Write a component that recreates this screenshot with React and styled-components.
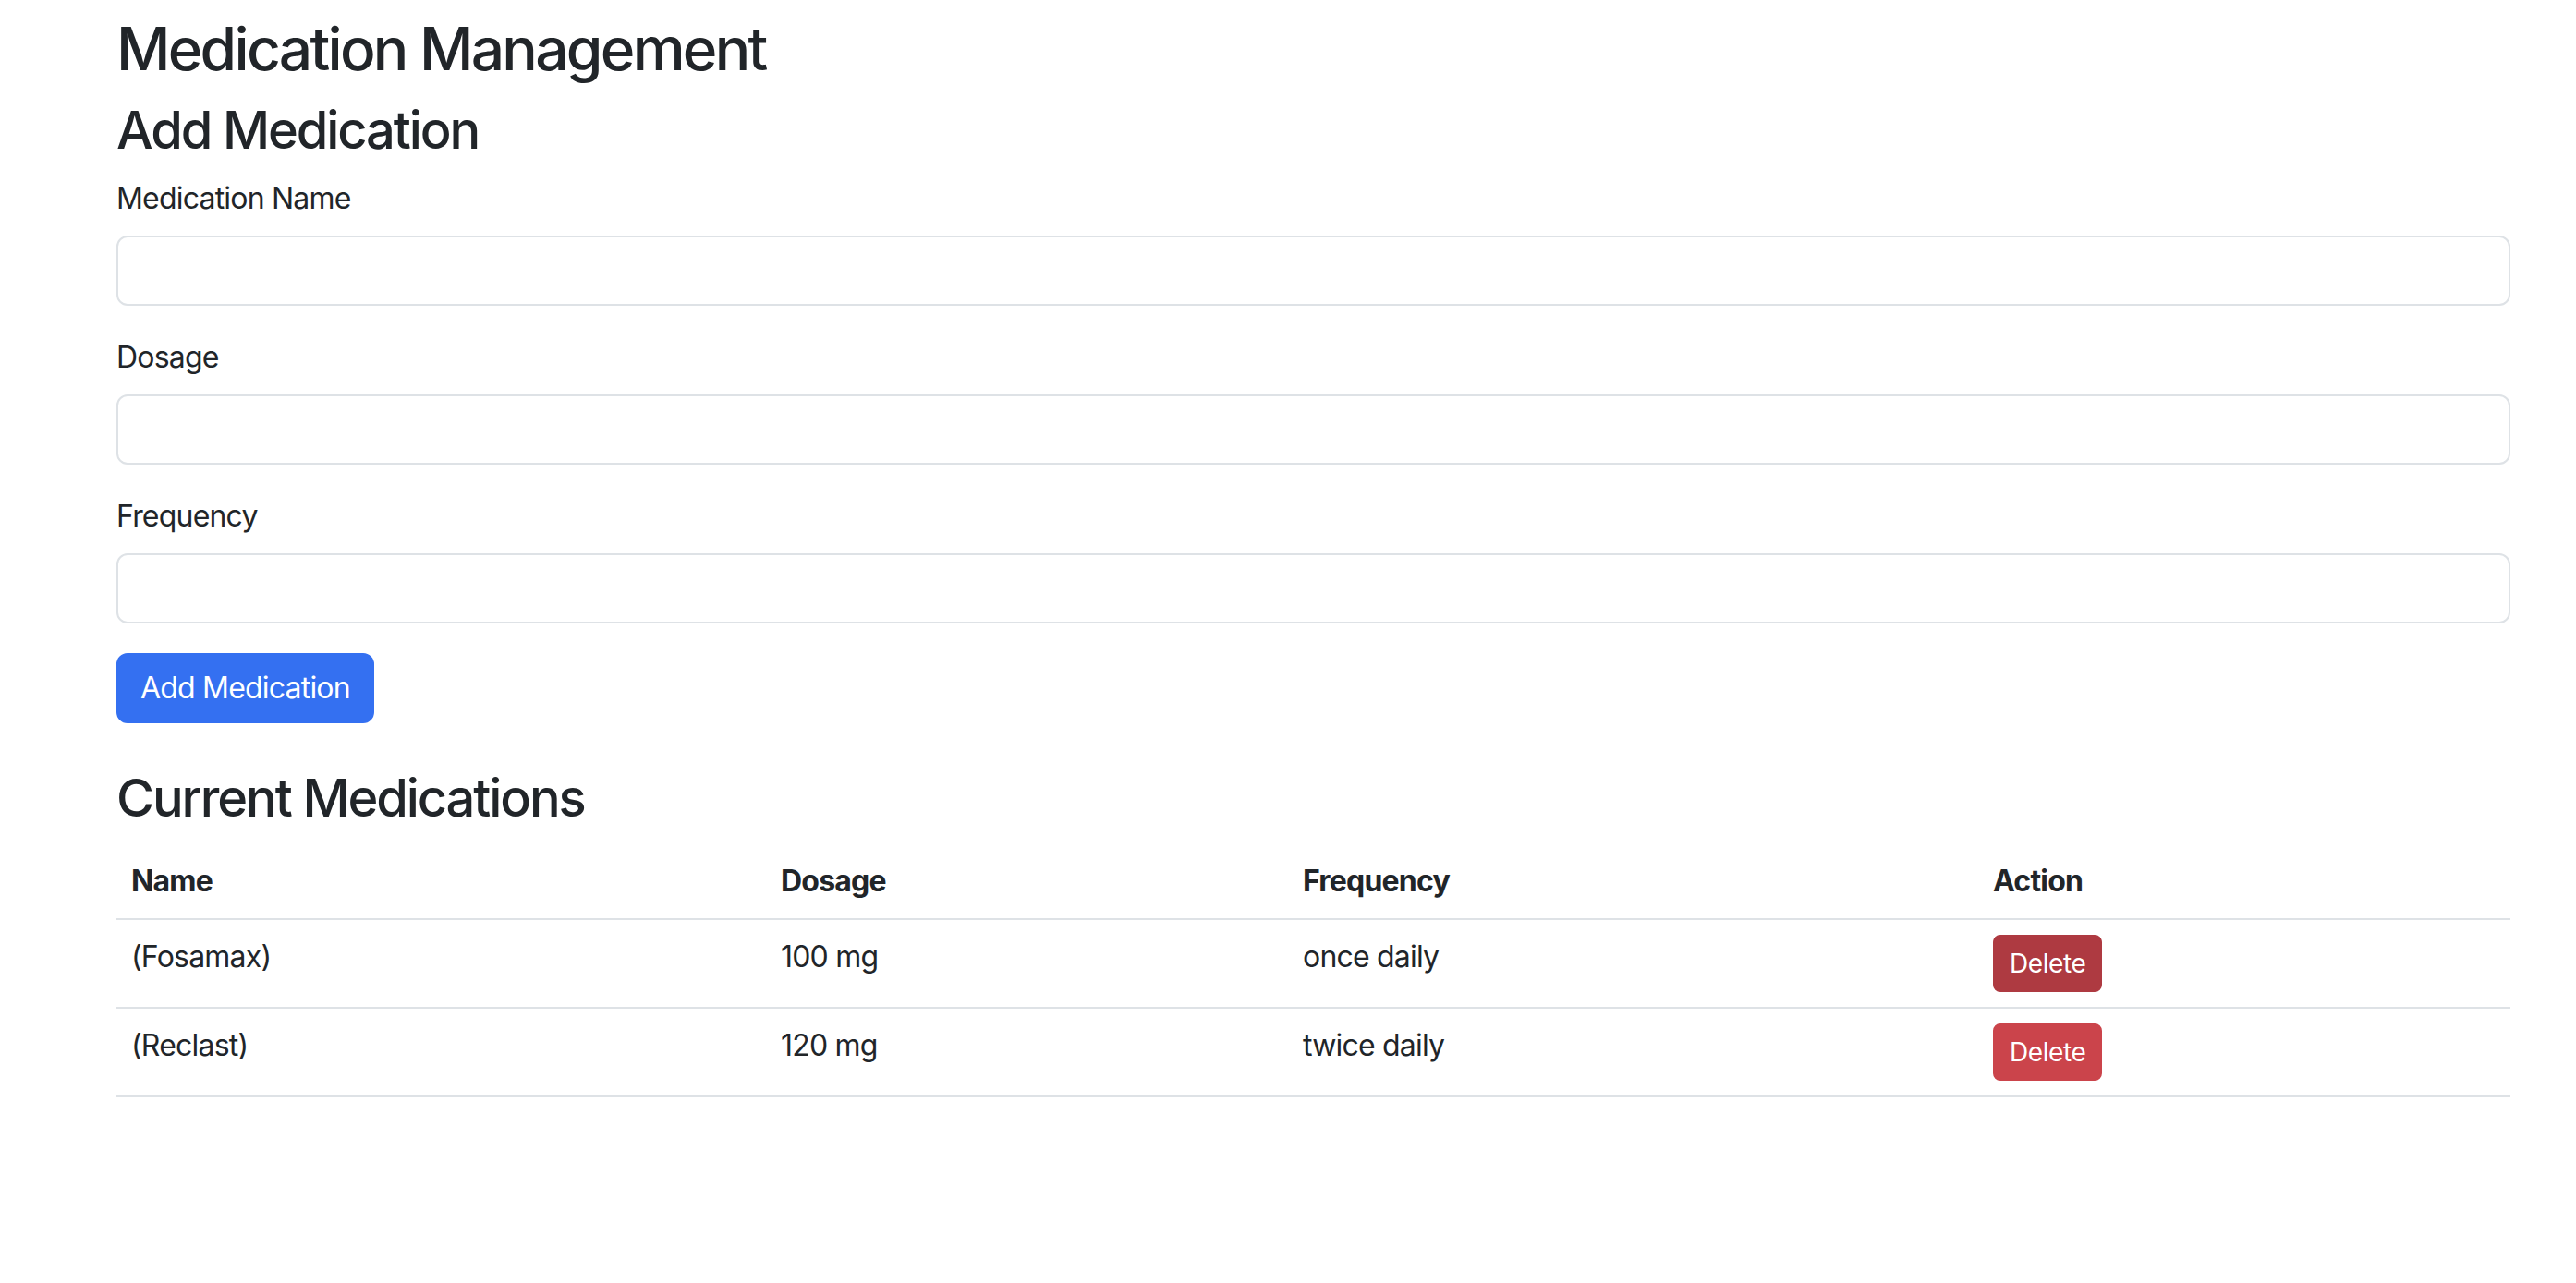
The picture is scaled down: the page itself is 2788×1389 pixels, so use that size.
import React, { useState } from "react";
import styled, { createGlobalStyle } from "styled-components";

const GlobalStyle = createGlobalStyle`
  * { box-sizing: border-box; }
  body {
    margin: 0;
    background: #fff;
    color: #212529;
    font-family: Inter, "Noto Sans", sans-serif;
    font-size: 32px;
    line-height: 1.5;
    letter-spacing: -0.8px;
  }
`;

const initial = [
  { id: 1, name: "(Fosamax)", dosage: "100 mg", frequency: "once daily" },
  { id: 2, name: "(Reclast)", dosage: "120 mg", frequency: "twice daily" },
];

const columns = [
  { label: "Name", width: 703 },
  { label: "Dosage", width: 565 },
  { label: "Frequency", width: 747 },
  { label: "Action", width: 576 },
];

const App = () => {
  const [meds, setMeds] = useState(initial);
  const [form, setForm] = useState({ name: "", dosage: "", frequency: "" });

  const update = (key) => (e) => setForm({ ...form, [key]: e.target.value });

  const add = (e) => {
    e.preventDefault();
    if (!form.name) return;
    setMeds([...meds, { id: Date.now(), ...form }]);
    setForm({ name: "", dosage: "", frequency: "" });
  };

  return (
    <Container>
      <GlobalStyle />
      <Title>Medication Management</Title>
      <Heading>Add Medication</Heading>
      <form onSubmit={add}>
        <Field>
          <Label>Medication Name</Label>
          <Input value={form.name} onChange={update("name")} />
        </Field>
        <Field>
          <Label>Dosage</Label>
          <Input value={form.dosage} onChange={update("dosage")} />
        </Field>
        <Field>
          <Label>Frequency</Label>
          <Input value={form.frequency} onChange={update("frequency")} />
        </Field>
        <PrimaryButton type="submit">Add Medication</PrimaryButton>
      </form>

      <Heading spaced>Current Medications</Heading>
      <Table>
        <thead>
          <tr>
            {columns.map((c) => (
              <Th key={c.label} $w={c.width}>
                {c.label}
              </Th>
            ))}
          </tr>
        </thead>
        <tbody>
          {meds.map((m, i) => (
            <tr key={m.id}>
              <Td>{m.name}</Td>
              <Td>{m.dosage}</Td>
              <Td>{m.frequency}</Td>
              <Td>
                <DeleteButton
                  $hover={i === 0}
                  onClick={() => setMeds(meds.filter((x) => x.id !== m.id))}
                >
                  Delete
                </DeleteButton>
              </Td>
            </tr>
          ))}
        </tbody>
      </Table>
    </Container>
  );
};

const Container = styled.div`
  width: 2717px;
  padding-left: 126px;
  padding-top: 15px;
`;

const Title = styled.h1`
  margin: 0 0 16px;
  font-size: 64px;
  font-weight: 500;
  line-height: 1.2;
  letter-spacing: -2.7px;
`;

const Heading = styled.h2`
  margin: ${(p) => (p.spaced ? "48px" : "0")} 0 16px;
  font-size: 56px;
  font-weight: 500;
  line-height: 1.2;
  letter-spacing: -2.1px;
`;

const Field = styled.div`
  margin-bottom: 32px;
`;

const Label = styled.label`
  display: inline-block;
  margin-bottom: 16px;
`;

const Input = styled.input`
  display: block;
  width: 100%;
  height: 76px;
  padding: 12px 24px;
  font: inherit;
  color: #212529;
  background: #fff;
  border: 2px solid #dee2e6;
  border-radius: 12px;
  outline: none;
`;

const PrimaryButton = styled.button`
  display: inline-block;
  padding: 12px 24px;
  font: inherit;
  letter-spacing: inherit;
  line-height: 1.5;
  color: #fff;
  background: #3470f1;
  border: 2px solid #3470f1;
  border-radius: 12px;
  cursor: pointer;
`;

const Table = styled.table`
  width: 100%;
  border-collapse: collapse;
  margin-bottom: 32px;
`;

const Th = styled.th`
  width: ${(p) => p.$w}px;
  padding: 16px;
  text-align: left;
  font-weight: 700;
  border-bottom: 2px solid #dee2e6;
`;

const Td = styled.td`
  padding: 16px;
  vertical-align: top;
  border-bottom: 2px solid #dee2e6;
`;

const DeleteButton = styled.button`
  padding: 8px 16px;
  font-family: inherit;
  font-size: 28px;
  letter-spacing: -0.4px;
  line-height: 1.5;
  color: #fff;
  background: ${(p) => (p.$hover ? "#ae3a41" : "#cb444b")};
  border: 2px solid ${(p) => (p.$hover ? "#ae3a41" : "#cb444b")};
  border-radius: 8px;
  cursor: pointer;
`;

export default App;
